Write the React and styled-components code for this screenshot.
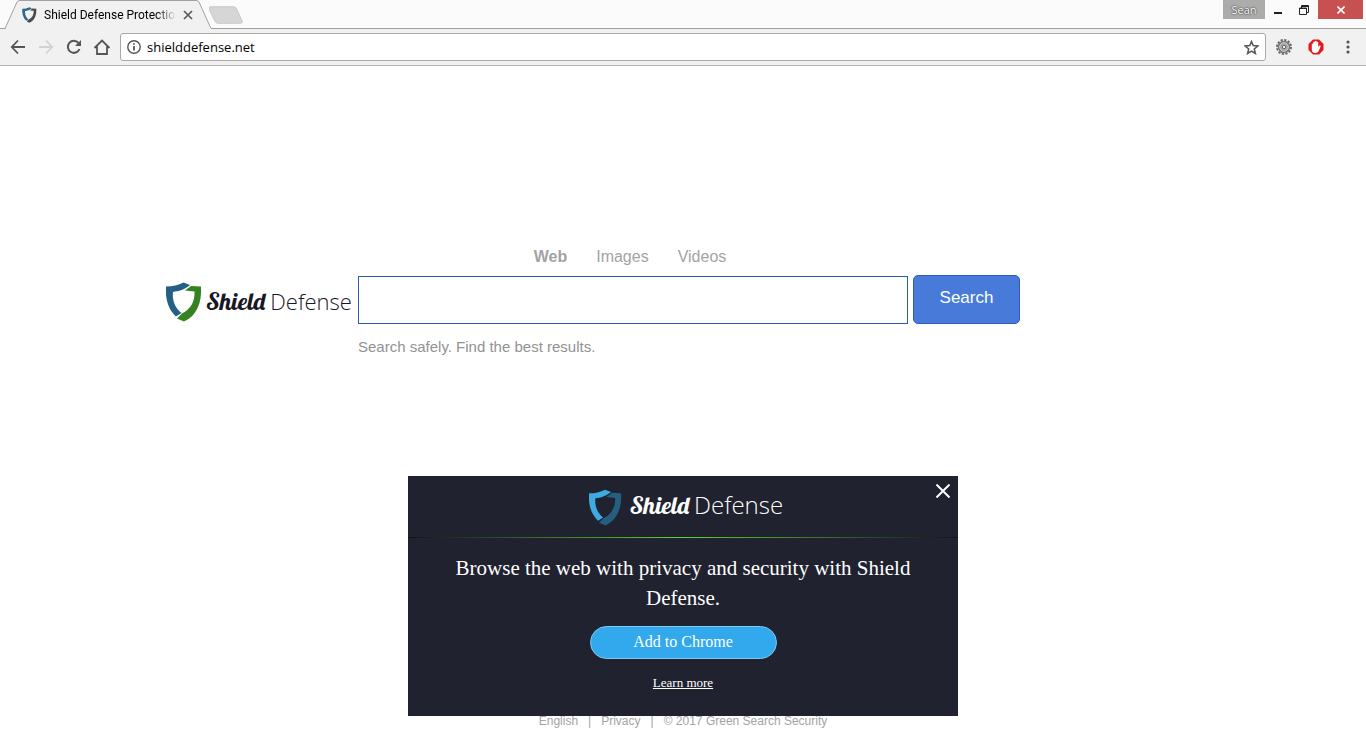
import React, { useState } from 'react';
import styled, { createGlobalStyle } from 'styled-components';

const GlobalStyle = createGlobalStyle`
  * {
    box-sizing: border-box;
  }

  body {
    margin: 0;
    background: #fff;
    font-family: "Liberation Sans", Arial, sans-serif;
  }

  button {
    padding: 0;
    border: none;
    background: none;
    cursor: pointer;
  }

  svg {
    display: block;
    flex: none;
  }
`;

const Window = styled.div`
  display: flex;
  flex-direction: column;
  min-height: 100vh;
`;

/* browser frame */

const TabStrip = styled.header`
  display: flex;
  justify-content: space-between;
  height: 29px;
  background: #fbfbfb;
  border-bottom: 1px solid #a0a0a0;
  font-family: "Open Sans", sans-serif;
`;

const TabList = styled.div`
  display: flex;
  padding-left: 5px;
`;

const Tab = styled.div`
  position: relative;
  display: flex;
  align-items: center;
  width: 204px;
  height: 29px;
  padding: 0 9px 0 17px;
`;

const TabShape = styled.svg`
  position: absolute;
  top: 0;
  left: 0;
`;

const TabIcon = styled.span`
  position: relative;
  width: 22px;
`;

const TabTitle = styled.span`
  position: relative;
  flex: 1;
  overflow: hidden;
  white-space: nowrap;
  font-family: Roboto, sans-serif;
  font-size: 12px;
  line-height: 18px;
  color: #000;
  mask-image: linear-gradient(to right, #000 85%, transparent);
`;

const TabClose = styled.button`
  position: relative;
  display: flex;
  justify-content: center;
  width: 24px;
`;

const NewTab = styled.button`
  align-self: center;
  padding-top: 2px;
`;

const WindowControls = styled.div`
  display: flex;
  align-items: flex-start;
`;

const UserBadge = styled.button`
  width: 42px;
  height: 19px;
  background: #acacac;
  color: #fff;
  font-family: "Open Sans", sans-serif;
  font-size: 11px;
  line-height: 18px;
  text-shadow: 0 0 2px #333, 0 0 1px #333;
`;

const WindowButton = styled.button`
  display: flex;
  align-items: center;
  justify-content: center;
  width: ${({ $wide }) => ($wide ? '45px' : '26px')};
  height: 19px;
  margin: ${({ $wide }) => ($wide ? '0 3px 0 1px' : '0')};
  background: ${({ $wide }) => ($wide ? '#c75050' : 'transparent')};
`;

const Toolbar = styled.div`
  display: flex;
  align-items: center;
  height: 37px;
  padding: 0 8px;
  background: #f1f1f1;
  border-bottom: 1px solid #b4b4b4;
`;

const ToolButton = styled.button`
  display: flex;
  align-items: center;
  justify-content: center;
  width: ${({ $width }) => $width || 28}px;
  height: 28px;
`;

const NavButtons = styled.nav`
  display: flex;
  margin: 0 4px 0 -4px;
`;

const AddressBar = styled.form`
  display: flex;
  flex: 1;
  align-items: center;
  height: 28px;
  padding: 0 6px;
  background: #fff;
  border: 1px solid #a9a9a9;
  border-radius: 3px;
`;

const AddressInput = styled.input`
  flex: 1;
  min-width: 0;
  padding: 0 6px;
  border: none;
  outline: none;
  background: none;
  color: #000;
  font-family: "Open Sans", sans-serif;
  font-size: 13px;
  line-height: 20px;
`;

const Extensions = styled.div`
  display: flex;
  margin: 0 -6px 0 2px;
`;

/* search page */

const Page = styled.main`
  display: flex;
  flex: 1;
  flex-direction: column;
`;

const SearchArea = styled.section`
  display: grid;
  grid-template-columns: 192px minmax(0, 550px) 107px;
  width: 100%;
  max-width: 1170px;
  margin: 0 auto;
  padding: 181px 68px 0;
`;

const SearchTabs = styled.nav`
  grid-column: 2;
  display: flex;
  justify-content: center;
  gap: 29px;
  padding: 0 6px 8px 0;
`;

const SearchTab = styled.a`
  color: #a3a3a3;
  font-size: 16px;
  font-weight: ${({ $active }) => ($active ? 'bold' : 'normal')};
  line-height: 20px;
  text-decoration: none;
`;

const SearchForm = styled.form`
  grid-column: 1 / -1;
  display: grid;
  grid-template-columns: 192px minmax(0, 550px) 107px;
  align-items: center;
`;

const SearchInput = styled.input`
  width: 100%;
  height: 48px;
  padding: 0 12px;
  border: 1px solid #3059b8;
  outline: none;
  color: #333;
  font-size: 18px;
`;

const SearchButton = styled.button`
  width: 107px;
  height: 49px;
  margin-left: 5px;
  padding-bottom: 4px;
  background: #487bd9;
  border: 1px solid #305cbf;
  border-radius: 5px;
  color: #fff;
  font-family: "Liberation Sans", Arial, sans-serif;
  font-size: 17px;
`;

const Tagline = styled.p`
  grid-column: 2;
  margin: 13px 0 0;
  color: #929292;
  font-size: 15px;
  line-height: 20px;
`;

const Brand = styled.div`
  display: flex;
  align-items: center;
  gap: ${({ $light }) => ($light ? '8px' : '4px')};
  padding-top: ${({ $light }) => ($light ? '0' : '5px')};
  color: ${({ $light }) => ($light ? '#fff' : '#171725')};
`;

const BrandName = styled.span`
  display: flex;
  align-items: baseline;
  gap: 5px;
  padding-bottom: ${({ $light }) => ($light ? '5px' : '2px')};
  line-height: 32px;
  white-space: nowrap;
`;

const BrandFirst = styled.span`
  font-family: Lobster, "Liberation Serif", serif;
  font-size: 24px;
`;

const BrandSecond = styled.span`
  font-family: "Open Sans", sans-serif;
  font-size: ${({ $light }) => ($light ? '24px' : '22px')};
  font-weight: 300;
`;

const Footer = styled.footer`
  display: flex;
  justify-content: center;
  gap: 10px;
  margin-top: auto;
  padding-bottom: 9px;
  color: #a3a3a3;
  font-size: 12px;
  line-height: 16px;
`;

const FooterLink = styled.a`
  color: inherit;
  text-decoration: none;
`;

/* extension offer */

const Popup = styled.aside`
  position: fixed;
  right: 0;
  bottom: 22px;
  left: 0;
  display: flex;
  flex-direction: column;
  align-items: center;
  max-width: 550px;
  margin: 0 auto;
  padding-bottom: 25px;
  background: #20222f;
  color: #fff;
  font-family: "Liberation Serif", "Times New Roman", serif;
`;

const PopupHeader = styled.div`
  display: flex;
  justify-content: center;
  width: 100%;
  padding: 13px 0 11px 6px;
`;

const PopupClose = styled.button`
  position: absolute;
  top: 8px;
  right: 8px;
`;

const Divider = styled.hr`
  width: 100%;
  height: 1px;
  margin: 0;
  border: none;
  background: linear-gradient(to right, #11131b, #5fd33b, #11131b);
`;

const PopupText = styled.p`
  margin: 15px 40px 13px;
  font-size: 21px;
  line-height: 30px;
  text-align: center;
`;

const AddButton = styled.button`
  width: 187px;
  height: 33px;
  padding-bottom: 2px;
  background: #32a9ec;
  border: 1px solid #80c8f0;
  border-radius: 17px;
  color: #fff;
  font-family: "Liberation Serif", "Times New Roman", serif;
  font-size: 16px;
`;

const LearnMore = styled.a`
  margin-top: 15px;
  color: #fff;
  font-size: 13px;
  line-height: 17px;
`;

const Shield = ({ left, right, width = 36, height = 40 }) => (
  <svg width={width} height={height} viewBox="0 0 36 40" aria-hidden="true">
    <path fill={left} d="M0 4.5C7 4.5 12 3 17.5 0.5L24 3C18 8 13 9 7 10C6 18 9 26 15.5 31L10 34.5C3 28-1 18 0 4.5Z" />
    <path fill={right} d="M25 4L35 4.5C36 20 31 34 18 39.5L11 36.5L16 31.5C25 27 29 19 28.5 9.5L19 8.5Z" />
  </svg>
);

const Logo = ({ light }) => (
  <Brand $light={light}>
    <Shield
      left={light ? '#3fa9e2' : '#246084'}
      right={light ? '#255f7e' : '#358320'}
      width={light ? 33 : 36}
      height={light ? 37 : 40}
    />
    <BrandName $light={light}>
      <BrandFirst>Shield</BrandFirst>
      <BrandSecond $light={light}>Defense</BrandSecond>
    </BrandName>
  </Brand>
);

const BrowserTabs = () => (
  <TabStrip>
    <TabList>
      <Tab>
        <TabShape width="207" height="29" viewBox="0 0 207 29" aria-hidden="true">
          <path fill="#f1f1f1" stroke="#a0a0a0" d="M0 28.5L12 2Q13 0.5 15 0.5H191Q193 0.5 194 2L206 28.5" />
          <path stroke="#f1f1f1" d="M1 28.5H206" />
        </TabShape>
        <TabIcon><Shield left="#2a6788" right="#444b52" width={15} height={16} /></TabIcon>
        <TabTitle>Shield Defense Protection</TabTitle>
        <TabClose aria-label="Close tab">
          <svg width="10" height="10" viewBox="0 0 10 10" stroke="#5a5a5a" strokeWidth="1.7">
            <path d="M1 1L9 9M9 1L1 9" />
          </svg>
        </TabClose>
      </Tab>
      <NewTab aria-label="New tab">
        <svg width="35" height="18" viewBox="0 0 36 18">
          <path fill="#d6d6d6" stroke="#c6c6c6" d="M2 0.5H25Q27 0.5 28 2L34 15Q35 17.5 32 17.5H9Q7 17.5 6 15L0 3Q-1 0.5 2 0.5Z" />
        </svg>
      </NewTab>
    </TabList>
    <WindowControls>
      <UserBadge>Sean</UserBadge>
      <WindowButton aria-label="Minimize">
        <svg width="8" height="10"><path fill="#222" d="M0 7H8V9H0Z" /></svg>
      </WindowButton>
      <WindowButton aria-label="Restore">
        <svg width="10" height="10" fill="none" stroke="#222">
          <path d="M0.5 3H7.5V9.5H0.5ZM2.5 3V0.5H9.5V7.5H7.5M0 3.5H8M2 1.5H10" />
        </svg>
      </WindowButton>
      <WindowButton $wide aria-label="Close">
        <svg width="8" height="8" stroke="#fff" strokeWidth="1.6"><path d="M0.5 0.5L7.5 7.5M7.5 0.5L0.5 7.5" /></svg>
      </WindowButton>
    </WindowControls>
  </TabStrip>
);

const BrowserToolbar = () => {
  const [url, setUrl] = useState('shielddefense.net');

  return (
    <Toolbar>
      <NavButtons>
        <ToolButton aria-label="Back">
          <svg width="16" height="16" viewBox="0 0 16 16" fill="none" stroke="#555" strokeWidth="1.8">
            <path d="M8 1.5L1.8 8L8 14.5M2 8H15" />
          </svg>
        </ToolButton>
        <ToolButton aria-label="Forward" disabled>
          <svg width="16" height="16" viewBox="0 0 16 16" fill="none" stroke="#d2d2d2" strokeWidth="1.8">
            <path d="M8 1.5L14.2 8L8 14.5M14 8H1" />
          </svg>
        </ToolButton>
        <ToolButton aria-label="Reload">
          <svg width="16" height="16" viewBox="0 0 16 16" fill="none" stroke="#555" strokeWidth="2">
            <path d="M13.5 10A6 6 0 1 1 12.5 4" />
            <path fill="#555" stroke="none" d="M15 1V7H9Z" />
          </svg>
        </ToolButton>
        <ToolButton aria-label="Home">
          <svg width="18" height="16" viewBox="0 0 18 16" fill="none" stroke="#555" strokeWidth="1.8">
            <path d="M1.5 9L9 1.5L16.5 9M4 7.5V15H14V7.5" />
          </svg>
        </ToolButton>
      </NavButtons>
      <AddressBar onSubmit={(e) => e.preventDefault()}>
        <svg width="14" height="14" viewBox="0 0 14 14" fill="none" stroke="#555" strokeWidth="1.4">
          <circle cx="7" cy="7" r="6.2" />
          <path strokeWidth="1.8" d="M7 6V10.5M7 3.2V4.8" />
        </svg>
        <AddressInput aria-label="Address" value={url} onChange={(e) => setUrl(e.target.value)} />
        <ToolButton $width={16} type="button" aria-label="Bookmark">
          <svg width="15" height="15" viewBox="0 0 15 15" fill="none" stroke="#555" strokeWidth="1.5">
            <path d="M7.5 1.5L9.2 5.6L13.8 6L10.3 9L11.4 13.5L7.5 11.1L3.6 13.5L4.7 9L1.2 6L5.8 5.6Z" />
          </svg>
        </ToolButton>
      </AddressBar>
      <Extensions>
        <ToolButton $width={32} aria-label="Settings extension">
          <svg width="16" height="16" viewBox="0 0 16 16">
            <circle cx="8" cy="8" r="7" fill="none" stroke="#6a6a6a" strokeWidth="2" strokeDasharray="2.2 1.465" />
            <circle cx="8" cy="8" r="6.3" fill="#777" />
            <circle cx="8" cy="8" r="4.4" fill="#a8a8a8" stroke="#c8c8c8" />
            <circle cx="8" cy="8" r="1.7" fill="#eee" stroke="#666" />
          </svg>
        </ToolButton>
        <ToolButton $width={32} aria-label="Ad blocker">
          <svg width="16" height="16" viewBox="0 0 16 16">
            <path fill="#e0191c" d="M5 0.5H11L15.5 5V11L11 15.5H5L0.5 11V5Z" />
            <path fill="#fff" d="M3.8 5Q4.5 4.2 5.3 5V3Q6 2 6.8 3V2.2Q7.7 1.2 8.6 2.2V3Q9.4 2.1 10.2 3V8L11.3 6.6Q12.4 6 12.8 7L10.6 12.2Q9.8 14 7.5 14Q3.8 14 3.8 10.5Z" />
          </svg>
        </ToolButton>
        <ToolButton $width={32} aria-label="Menu">
          <svg width="4" height="14" viewBox="0 0 4 14" fill="#555">
            <circle cx="2" cy="2" r="1.6" />
            <circle cx="2" cy="7" r="1.6" />
            <circle cx="2" cy="12" r="1.6" />
          </svg>
        </ToolButton>
      </Extensions>
    </Toolbar>
  );
};

const App = () => {
  const [query, setQuery] = useState('');
  const [activeTab, setActiveTab] = useState('Web');
  const [showPopup, setShowPopup] = useState(true);

  return (
    <Window>
      <GlobalStyle />
      <BrowserTabs />
      <BrowserToolbar />
      <Page>
        <SearchArea>
          <SearchTabs>
            {['Web', 'Images', 'Videos'].map((name) => (
              <SearchTab key={name} href="#" $active={name === activeTab} onClick={() => setActiveTab(name)}>
                {name}
              </SearchTab>
            ))}
          </SearchTabs>
          <SearchForm onSubmit={(e) => e.preventDefault()}>
            <Logo />
            <SearchInput aria-label="Search the web" value={query} onChange={(e) => setQuery(e.target.value)} />
            <SearchButton type="submit">Search</SearchButton>
          </SearchForm>
          <Tagline>Search safely. Find the best results.</Tagline>
        </SearchArea>
        <Footer>
          <FooterLink href="#">English</FooterLink>
          <span>|</span>
          <FooterLink href="#">Privacy</FooterLink>
          <span>|</span>
          <span>© 2017 Green Search Security</span>
        </Footer>
      </Page>
      {showPopup && (
        <Popup>
          <PopupHeader>
            <Logo light />
          </PopupHeader>
          <PopupClose aria-label="Close" onClick={() => setShowPopup(false)}>
            <svg width="14" height="14" viewBox="0 0 14 14" stroke="#fff" strokeWidth="2">
              <path d="M0.5 0.5L13.5 13.5M13.5 0.5L0.5 13.5" />
            </svg>
          </PopupClose>
          <Divider />
          <PopupText>Browse the web with privacy and security with Shield Defense.</PopupText>
          <AddButton>Add to Chrome</AddButton>
          <LearnMore href="#">Learn more</LearnMore>
        </Popup>
      )}
    </Window>
  );
};

export default App;
